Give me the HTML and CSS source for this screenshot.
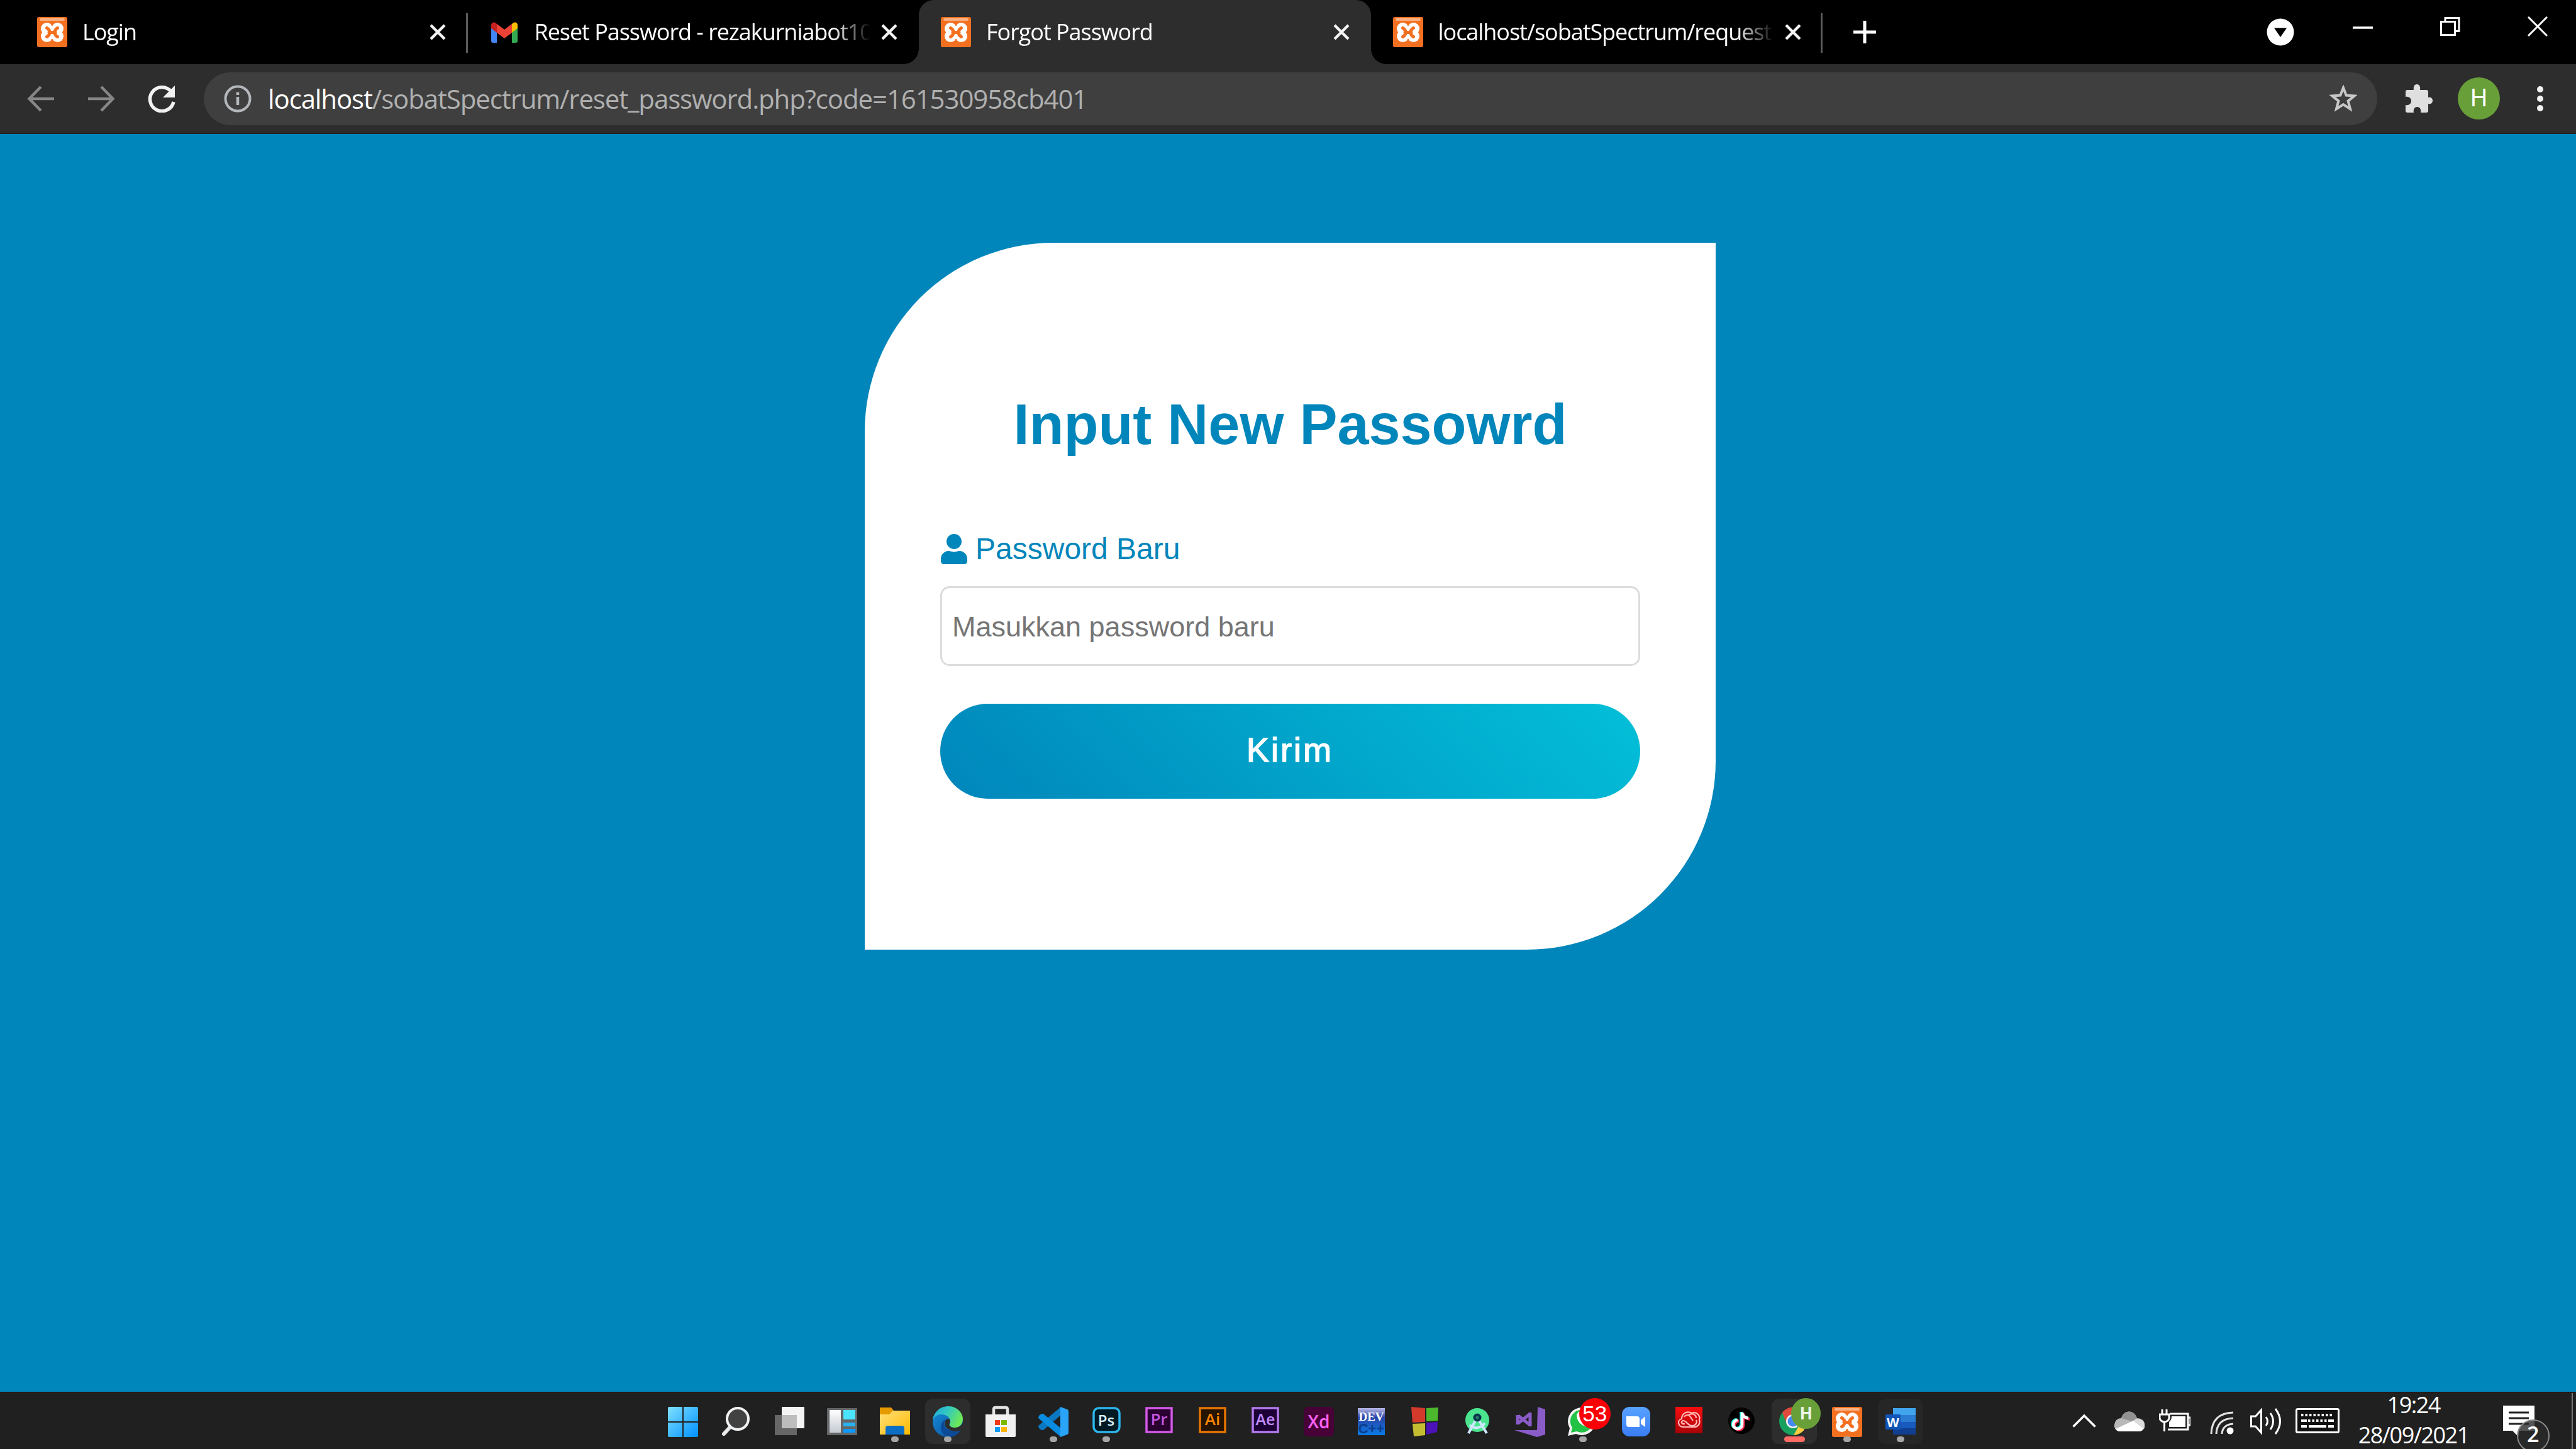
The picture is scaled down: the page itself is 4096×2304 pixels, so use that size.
FILE: index.html
```html
<!DOCTYPE html>
<html lang="id">
<head>
<meta charset="utf-8">
<title>Forgot Password</title>
<link rel="stylesheet" href="styles.css">
</head>
<body>
<svg class="defs" width="0" height="0">
  <defs>
    <linearGradient id="gWin" x1="0" y1="0" x2="1" y2="1"><stop offset="0" stop-color="#7fe0ff"/><stop offset="1" stop-color="#0090ff"/></linearGradient>
    <linearGradient id="gFolder" x1="0" y1="0" x2="1" y2="1"><stop offset="0" stop-color="#ffe07a"/><stop offset="1" stop-color="#ffb900"/></linearGradient>
    <linearGradient id="gEdgeTop" x1="0" y1="0" x2="1" y2=".4"><stop offset="0" stop-color="#1fa8e0"/><stop offset=".5" stop-color="#32c8c0"/><stop offset="1" stop-color="#6be85a"/></linearGradient>
    <linearGradient id="gEdgeLow" x1="0" y1="0" x2="1" y2="1"><stop offset="0" stop-color="#1590dc"/><stop offset="1" stop-color="#0c4a98"/></linearGradient>
    <linearGradient id="gPanel" x1="0" y1="0" x2="0" y2="1"><stop offset="0" stop-color="#fff"/><stop offset="1" stop-color="#c4c9d2"/></linearGradient>
    <linearGradient id="gDev" x1="0" y1="0" x2="0" y2="1"><stop offset="0" stop-color="#b9b9e6"/><stop offset=".35" stop-color="#2a45a8"/><stop offset="1" stop-color="#0a7be8"/></linearGradient>
    <linearGradient id="gZoom" x1="0" y1="0" x2="0" y2="1"><stop offset="0" stop-color="#57a2ff"/><stop offset="1" stop-color="#3a7df5"/></linearGradient>
    <linearGradient id="gRed" x1="0" y1="0" x2="0" y2="1"><stop offset="0" stop-color="#fb0d10"/><stop offset="1" stop-color="#a80206"/></linearGradient>
    <symbol id="xampp" viewBox="0 0 48 48">
      <rect width="48" height="48" rx="3" fill="#f37021"/>
      <rect x="4" y="2" width="40" height="4" rx="2" fill="#f9b183"/>
      <g fill="#fff"><circle cx="15.500" cy="18.500" r="9.500"/><circle cx="32.500" cy="18.500" r="9.500"/><circle cx="15.500" cy="30.500" r="9.500"/><circle cx="32.500" cy="30.500" r="9.500"/><path d="M14 14h20v21H14z"/></g>
      <path d="M24 8v5.500M24 41v-5.500" stroke="#f37021" stroke-width="3"/>
      <path d="M15.500 17.500q5 3 4 7 1 4-4 7M32.500 17.500q-5 3-4 7-1 4 4 7M19 24.500h10" fill="none" stroke="#f37021" stroke-width="5" stroke-linecap="round"/>
    </symbol>
    <symbol id="cross" viewBox="0 0 26 26"><path d="M2 2l22 22M24 2L2 24" stroke="#f4f4f4" stroke-width="4.500" fill="none"/></symbol>
  </defs>
</svg>

<header class="tabstrip">
  <div class="tab">
    <svg class="favicon"><use href="#xampp"/></svg>
    <span class="tab-title">Login</span>
    <svg class="tab-close"><use href="#cross"/></svg>
  </div>
  <div class="tab divided">
    <svg class="favicon" viewBox="0 0 48 48"><path d="M3 12v26a3 3 0 0 0 3 3h6V21z" fill="#4285f4"/><path d="M45 12v26a3 3 0 0 1-3 3h-6V21z" fill="#34a853"/><path d="M36 11l2-1.500c3-2.200 7-.3 7 3.500v5l-9 7z" fill="#fbbc04"/><path d="M12 11l-2-1.500C7 7.300 3 9.200 3 13v5l9 7z" fill="#c5221f"/><path d="M12 11l12 9 12-9v14l-12 9-12-9z" fill="#ea4335"/></svg>
    <span class="tab-title">Reset Password - rezakurniabot10</span>
    <svg class="tab-close"><use href="#cross"/></svg>
  </div>
  <div class="tab active">
    <svg class="favicon"><use href="#xampp"/></svg>
    <span class="tab-title">Forgot Password</span>
    <svg class="tab-close"><use href="#cross"/></svg>
  </div>
  <div class="tab last">
    <svg class="favicon"><use href="#xampp"/></svg>
    <span class="tab-title">localhost/sobatSpectrum/request</span>
    <svg class="tab-close"><use href="#cross"/></svg>
  </div>
  <svg class="new-tab" viewBox="0 0 36 36"><path d="M18 0v36M0 18h36" stroke="#fff" stroke-width="5"/></svg>
  <div class="window-buttons">
    <svg width="44" height="44" viewBox="0 0 44 44" class="drop"><circle cx="22" cy="22" r="21.500" fill="#fff"/><path d="M12 15.500h20L22 30z" fill="#000"/></svg>
    <svg width="32" height="32" viewBox="0 0 32 32"><path d="M0 18h32" stroke="#fff" stroke-width="3.500"/></svg>
    <svg width="32" height="32" viewBox="0 0 32 32"><path d="M1.500 8.500h22v21h-22zM8 8V2.500h22v21h-6" fill="none" stroke="#fff" stroke-width="3"/></svg>
    <svg width="32" height="32" viewBox="0 0 32 32"><path d="M1 1l30 30M31 1L1 31" stroke="#fff" stroke-width="3"/></svg>
  </div>
</header>

<nav class="toolbar">
  <svg class="nav-icon" viewBox="0 0 44 44"><path d="M43 22H4M22 3L3.500 22 22 41" fill="none" stroke="#868686" stroke-width="4.500"/></svg>
  <svg class="nav-icon" viewBox="0 0 44 44"><path d="M1 22h39M22 3l18.500 19L22 41" fill="none" stroke="#868686" stroke-width="4.500"/></svg>
  <svg class="nav-icon" viewBox="0 0 44 44"><path d="M37.500 11A19 19 0 1 0 41 27" fill="none" stroke="#f1f1f1" stroke-width="5.500"/><path d="M43 1v19H24z" fill="#f1f1f1"/></svg>
  <div class="omnibox">
    <svg class="info" viewBox="0 0 44 44"><circle cx="22" cy="22" r="19.500" fill="none" stroke="#b4b8bc" stroke-width="4"/><path d="M22 19v13M22 11.500v4.500" stroke="#b4b8bc" stroke-width="4.500"/></svg>
    <span class="url"><b>localhost</b>/sobatSpectrum/reset_password.php?code=161530958cb401</span>
    <svg class="star" viewBox="0 0 44 44"><path d="M22 4.500l4.700 12.100 13 .8-10.100 8.200 3.400 12.600L22 31.100l-11 7.100 3.400-12.600L4.300 17.400l13-.8z" fill="none" stroke="#c8c8c8" stroke-width="4"/></svg>
  </div>
  <svg class="puzzle" viewBox="0 0 44 46"><path d="M4 9h10c-1-5 1-9 5-9s6 4 5 9h10a3 3 0 0 1 3 3v9c4-1 7 1 7 5s-3 6-7 5v11a3 3 0 0 1-3 3h-9c1-5-1-9-5.500-9S13 40 14 45H4a3 3 0 0 1-3-3v-9c5 1 9-2 9-6.500S6 19 1 20v-8a3 3 0 0 1 3-3z" fill="#dfdfdf"/></svg>
  <span class="avatar">H</span>
  <svg class="menu" viewBox="0 0 12 44"><circle cx="6" cy="7" r="5" fill="#f1f1f1"/><circle cx="6" cy="22" r="5" fill="#f1f1f1"/><circle cx="6" cy="37" r="5" fill="#f1f1f1"/></svg>
</nav>

<main class="page">
  <form class="card">
    <h1 class="title">Input New Passowrd</h1>
    <label class="label" for="pw">
      <svg class="user" viewBox="0 0 448 512"><path fill="#0086bb" d="M224 256c70.700 0 128-57.300 128-128S294.700 0 224 0 96 57.300 96 128s57.300 128 128 128zm89.600 32h-16.700c-22.200 10.200-46.900 16-72.900 16s-50.600-5.800-72.900-16h-16.700C60.200 288 0 348.200 0 422.400V464c0 26.500 21.500 48 48 48h352c26.500 0 48-21.500 48-48v-41.600c0-74.200-60.200-134.400-134.400-134.400z"/></svg>
      Password Baru
    </label>
    <input class="field" id="pw" type="password" placeholder="Masukkan password baru">
    <button class="submit" type="button">Kirim</button>
  </form>
</main>

<footer class="taskbar">
  <div class="apps">
    <span class="app"><svg viewBox="0 0 48 48"><path d="M0 2a2 2 0 0 1 2-2h21v23H0zM25 0h21a2 2 0 0 1 2 2v21H25zM0 25h23v23H2a2 2 0 0 1-2-2zM25 25h23v21a2 2 0 0 1-2 2H25z" fill="url(#gWin)"/></svg></span>
    <span class="app"><svg viewBox="0 0 48 48"><path d="M16 31L5 43" stroke="#e6e8ea" stroke-width="6" stroke-linecap="round"/><circle cx="27" cy="19" r="17" fill="#424242" stroke="#f0f2f4" stroke-width="4"/></svg></span>
    <span class="app"><svg viewBox="0 0 48 48"><rect x="13" y="0" width="36" height="34" rx="1" fill="#f4f4f4"/><path d="M2 13h11v21h24v11H2z" fill="#666"/><path d="M13 13h24v21H13z" fill="#bdbdbd"/></svg></span>
    <span class="app"><svg viewBox="0 0 48 48"><rect x="1" y="2" width="48" height="43" rx="1" fill="#646668"/><rect x="5" y="5" width="18" height="36" fill="url(#gPanel)"/><path d="M27 5h19v15H27z" fill="#4ae4ff"/><path d="M27 25h19v6H27z" fill="#28b4f4"/><path d="M27 35h19v6H27z" fill="#0d99ff"/></svg></span>
    <span class="app open"><svg viewBox="0 0 48 48"><path d="M0 1h18l4 5-4 6H0z" fill="#e59a00"/><path d="M0 12h15l6-6h27v38H0z" fill="url(#gFolder)"/><path d="M9 44V34q0-4 4-4h22q4 0 4 4v10z" fill="#0c6fc6"/></svg></span>
    <span class="app open tinted"><svg viewBox="0 0 48 48"><circle cx="24" cy="24" r="24" fill="url(#gEdgeLow)"/><path d="M0 21C2 8 12-1 25-1c14 0 23 11 23 20 0 8-5 14-13 14-6 0-9-2-9-4 0-1 2-2 2-6 0-6-6-11-14-11C7 12 2 16 0 21z" fill="url(#gEdgeTop)"/><path d="M46 35c-2 2-6 4-11 4-10 0-17-6-17-13 0-3 2-6 4-7-5 2-9 7-9 14 0 8 7 15 15 15 8-1 14-6 18-13z" fill="#0c4a98"/><path d="M49 34c-4 4-9 5-14 5-9-1-16-6-16-13 0-4 3-7 6-7 3 1 3 4 2 7-2 4 2 7 8 7 7 0 11-3 13-8z" fill="#2d2d2d"/></svg></span>
    <span class="app"><svg viewBox="0 0 48 48"><path d="M13 13V4q0-3 3-3h16q3 0 3 3v9" fill="none" stroke="#e2e2e2" stroke-width="4.500"/><path d="M0 12h48v34a2 2 0 0 1-2 2H2a2 2 0 0 1-2-2z" fill="#f1f1f1"/><path d="M15 21h8v8h-8z" fill="#f03a17"/><path d="M25 21h9v8h-9z" fill="#7cba00"/><path d="M15 32h8v8h-8z" fill="#0a9cf0"/><path d="M25 32h9v8h-9z" fill="#ffb600"/></svg></span>
    <span class="app open"><svg viewBox="0 0 48 48"><path d="M36 0L0 30l1 4 4 3h3L37 12z" fill="#0a78c0"/><path d="M36 48L0 18l1-4 4-3h3l29 24z" fill="#0a8ce0"/><path d="M35 0l11 4q2 1 2 3v34q0 2-2 3l-11 4z" fill="#2aa4f6"/></svg></span>
    <span class="app open"><svg viewBox="0 0 48 48"><rect x="4" y="2" width="41" height="38" rx="8" fill="#001a24" stroke="#2cb7ec" stroke-width="3.500"/><text x="24" y="30" class="glyph" font-size="24" fill="#d5f1fa">Ps</text></svg></span>
    <span class="app"><svg viewBox="0 0 48 48"><rect x="4" y="2" width="40" height="38" fill="#2a0030" stroke="#d45ae8" stroke-width="3.500"/><text x="24" y="29" class="glyph" font-size="26" fill="#c255e0">Pr</text></svg></span>
    <span class="app"><svg viewBox="0 0 48 48"><rect x="4" y="2" width="40" height="38" fill="#261300" stroke="#ea7500" stroke-width="3.500"/><text x="24" y="29" class="glyph" font-size="26" fill="#ff8400">Ai</text></svg></span>
    <span class="app"><svg viewBox="0 0 48 48"><rect x="4" y="2" width="40" height="38" fill="#1c0036" stroke="#b67af0" stroke-width="3.500"/><text x="24" y="29" class="glyph" font-size="25" fill="#c08aff">Ae</text></svg></span>
    <span class="app"><svg viewBox="0 0 48 48"><rect x="1" width="48" height="47" rx="7" fill="#470137"/><text x="25" y="34" class="glyph" font-size="28" fill="#ff61f6">Xd</text></svg></span>
    <span class="app"><svg viewBox="0 0 48 48"><path d="M3 2h43v43H3z" fill="url(#gDev)"/><text x="24.500" y="22" class="serif" font-size="19" fill="#fff">DEV</text><text x="24.500" y="42" class="cpp" font-size="22" fill="#0a3f8c">C++</text></svg></span>
    <span class="app"><svg viewBox="0 0 48 48"><path d="M4 0l22 2v22L6 25z" fill="#d33a2c"/><path d="M28 2l19-1-1 21-18 1z" fill="#4cb82c"/><path d="M6 27l20-1v19L8 47z" fill="#c4bd32"/><path d="M28 25l18-1-1 16-17 4z" fill="#4a12b8"/></svg></span>
    <span class="app"><svg viewBox="0 0 48 48"><circle cx="25" cy="21" r="19" fill="#4be58f"/><path d="M22 22L11 42M28 22l12 20M13 29q12 10 24-3" fill="none" stroke="#cfe6ff" stroke-width="4"/><circle cx="25" cy="17" r="4.500" fill="#2b7a66" stroke="#08344c" stroke-width="4"/></svg></span>
    <span class="app"><svg viewBox="0 0 48 48"><path d="M36 0l12 4v40l-13 4-36-11h36z" fill="#8a5cc8"/><path d="M5 14L24 29M5 26L24 11M24 9v22M4 13v15" fill="none" stroke="#8a5cc8" stroke-width="5"/></svg></span>
    <span class="app open"><svg viewBox="0 0 48 48"><path d="M0 46l3-12A22 22 0 1 1 13 43z" fill="#f4f4f4"/><path d="M5 41l2-8a18 18 0 1 1 7 6z" fill="#22c244"/><path d="M14 12q0 16 17 20l6-5-7-5-4 3q-6-3-7-8l3-4-4-6z" fill="#fff"/></svg><i class="count">53</i></span>
    <span class="app"><svg viewBox="0 0 48 48"><rect x="2" y="0" width="45" height="47" rx="12" fill="url(#gZoom)"/><path d="M9 15h17q4 0 4 4v13H13q-4 0-4-4zM32 21l7-6v17l-7-5z" fill="#fff"/></svg></span>
    <span class="app"><svg viewBox="0 0 48 48"><path d="M3 0h43v42H3z" fill="url(#gRed)"/><g fill="none" stroke="#ffb9b9" stroke-width="2.200"><path d="M16 32c-9 0-11-11-3-13 0-9 9-13 16-9 8-3 14 4 12 11 2 7-3 11-9 11z"/><path d="M18 27c-6 1-7-5-2-5 4 0 7 8 13 8 7 0 9-6 7-9M17 16c2-4 8-4 10 0l4 6M24 13c5-4 12-1 12 5"/></g></svg></span>
    <span class="app"><svg viewBox="0 0 48 48"><circle cx="24" cy="22" r="21" fill="#000"/><g fill="none" stroke-width="4.500"><path d="M25 9v19a7 7 0 1 1-7-7M25 9q1 8 10 9" stroke="#25f4ee" transform="translate(-1.500 -1)"/><path d="M25 9v19a7 7 0 1 1-7-7M25 9q1 8 10 9" stroke="#fe2c55" transform="translate(2 1.500)"/><path d="M25 9v19a7 7 0 1 1-7-7M25 9q1 8 10 9" stroke="#fff"/></g></svg></span>
    <span class="app tinted current"><svg viewBox="0 0 48 48"><circle cx="22" cy="23" r="22" fill="#18a05e"/><path d="M5 9A22 22 0 0 1 44 18H22L12 27z" fill="#e04a3c"/><path d="M44 20a22 22 0 0 1-21 25l10-18z" fill="#ffcd40"/><circle cx="22" cy="23" r="11" fill="#f4f4f4"/><circle cx="22" cy="23" r="8.500" fill="#4688f4"/></svg><i class="profile">H</i></span>
    <span class="app open"><svg viewBox="0 0 48 48"><use href="#xampp"/></svg></span>
    <span class="app open tinted dim"><svg viewBox="0 0 48 48"><path d="M12 2h36v11H12z" fill="#41a5ee"/><path d="M12 13h36v11H12z" fill="#2b7cd3"/><path d="M12 24h36v10H12z" fill="#185abd"/><path d="M12 34h36v10H12z" fill="#103f91"/><rect y="12" width="24" height="24" rx="1" fill="#1255b8"/><text x="12" y="31.500" class="word" font-size="21" fill="#fff">W</text></svg></span>
  </div>
  <div class="tray">
    <svg class="chev" viewBox="0 0 38 22"><path d="M1.500 20.500L19 3l17.500 17.500" fill="none" stroke="#fff" stroke-width="3.500"/></svg>
    <svg class="cloud" viewBox="0 0 50 34"><path d="M10 33C2 33-1 25 2 19c1-4 5-7 10-7C15-1 32-3 37 12c8 0 13 5 12 12 0 6-4 9-9 9z" fill="#b8b8b8"/><path d="M12 12C16-1 32-3 37 12l-8 5z" fill="#929292"/><path d="M3 29l28-13 16 12q-2 5-7 5H10q-5 0-7-4z" fill="#fff"/><path d="M31 16q7-6 15 0 5 6 2 13z" fill="#dcdcdc"/></svg>
    <svg class="battery" viewBox="0 0 50 36"><path d="M17 7h29v25H14M47 13h3v12h-3" fill="none" stroke="#fff" stroke-width="3"/><path d="M20 11h22v17H16v-8q4-3 4-9z" fill="#fff"/><path d="M5 0v8M12 0v8M1 8h15v6q-1 5-7 6-7-1-8-6zM8.500 20v15" fill="none" stroke="#fff" stroke-width="3"/></svg>
    <svg class="wifi" viewBox="0 0 38 37"><g fill="none" stroke="#e0e0e0" stroke-width="3"><path d="M2 36Q3 3 37 2"/><path d="M10 36q1-24 27-25"/><path d="M19 36q1-15 18-16"/></g><circle cx="32" cy="31" r="5.500" fill="#fff"/></svg>
    <svg class="sound" viewBox="0 0 50 44"><path d="M1.500 14h7l9-10v36l-9-10h-7z" fill="none" stroke="#fff" stroke-width="3"/><path d="M25 15q5 7 0 14M32 9q9 13 0 26M40 2q15 20 0 40" fill="none" stroke="#fff" stroke-width="3"/></svg>
    <svg class="keys" viewBox="0 0 70 40"><rect x="1.500" y="1.500" width="67" height="37" rx="2" fill="#111" stroke="#fff" stroke-width="3"/><path d="M9 11h52" stroke="#fff" stroke-width="4" stroke-dasharray="3.500 3"/><path d="M20 20h30" stroke="#fff" stroke-width="4" stroke-dasharray="3.500 3"/><path d="M9 20h9M52 20h9M9 29h9M21 29h28M52 29h9" stroke="#fff" stroke-width="4"/></svg>
    <div class="clock"><span>19:24</span><span>28/09/2021</span></div>
    <div class="notice">
      <svg viewBox="0 0 50 50"><path d="M0 0h50v40H25v10L15 40H0z" fill="#fff"/><path d="M9 11h32M9 20h32M9 29h32" stroke="#222" stroke-width="3"/></svg>
      <i class="notice-count">2</i>
    </div>
  </div>
</footer>
</body>
</html>
```
FILE: styles.css
```css
* { box-sizing: border-box; }
body {
  margin: 0;
  width: 4096px;
  height: 2304px;
  overflow: hidden;
  display: flex;
  flex-direction: column;
  background: #0086bb;
  font-family: "Liberation Sans", Arial, sans-serif;
}
svg { display: block; flex: none; }
.defs { position: absolute; }
i { font-style: normal; }

/* tab strip */
.tabstrip {
  height: 102px;
  flex: none;
  display: flex;
  background: #000;
  padding-left: 24px;
  font-family: "Open Sans", "Noto Sans", sans-serif;
}
.tab {
  position: relative;
  width: 718.500px;
  height: 102px;
  flex: none;
  display: flex;
  align-items: center;
  padding: 0 34px 0 35px;
}
.favicon { width: 48px; height: 48px; }
.tab-title {
  flex: 1;
  margin: 0 17px 0 24px;
  overflow: hidden;
  white-space: nowrap;
  color: #fff;
  font-size: 36px;
  line-height: 60px;
  letter-spacing: -1.050px;
  -webkit-mask-image: linear-gradient(to right, #000 calc(100% - 60px), transparent);
  mask-image: linear-gradient(to right, #000 calc(100% - 60px), transparent);
}
.tab-close { width: 26px; height: 26px; }
.divided::before, .last::after {
  content: "";
  position: absolute;
  top: 21px;
  left: -2px;
  width: 3px;
  height: 63px;
  background: #5a5a5a;
}
.last::after { left: auto; right: 0; }
.active { background: #2d2d2d; border-radius: 24px 24px 0 0; }
.active::before, .active::after {
  content: "";
  position: absolute;
  bottom: 0;
  width: 24px;
  height: 24px;
}
.active::before { left: -24px; background: radial-gradient(circle at 0 0, transparent 23.500px, #2d2d2d 24px); }
.active::after { right: -24px; background: radial-gradient(circle at 100% 0, transparent 23.500px, #2d2d2d 24px); }
.new-tab { width: 36px; height: 36px; margin: 33px 0 0 49px; }
.window-buttons {
  margin-left: auto;
  padding: 26px 45px 0 0;
  display: flex;
  gap: 107px;
}
.window-buttons .drop { margin: 3px -14px 0 0; }

/* address bar row */
.toolbar {
  height: 111px;
  flex: none;
  display: flex;
  align-items: center;
  padding: 0 51px 0 43px;
  background: #2d2d2d;
  border-bottom: 2px solid #241e1c;
}
.nav-icon { width: 44px; height: 44px; margin-right: 52px; }
.nav-icon + .omnibox { margin-left: -7px; }
.omnibox {
  flex: 1;
  height: 84px;
  display: flex;
  align-items: center;
  padding: 0 32px;
  border-radius: 42px;
  background: #3f3f3f;
}
.info { width: 44px; height: 44px; }
.url {
  flex: 1;
  margin-left: 26px;
  color: #b0b0b0;
  white-space: nowrap;
  font: 42px/60px "Open Sans", "Noto Sans", sans-serif;
  letter-spacing: -1.120px;
}
.url b { font-weight: 400; color: #fff; }
.star { width: 44px; height: 44px; }
.puzzle { width: 44px; height: 46px; margin-left: 44px; }
.avatar {
  width: 67px;
  height: 67px;
  margin: 0 58px 0 40px;
  border-radius: 50%;
  background: #689f38;
  color: #fff;
  text-align: center;
  font: 38px/67px Roboto, sans-serif;
}
.menu { width: 12px; height: 44px; }

/* page */
.page { flex: 1; padding: 173px 0 0 1375px; }
.card {
  width: 1353px;
  height: 1124px;
  padding: 237px 120px 0;
  display: flex;
  flex-direction: column;
  background: #fff;
  border-radius: 300px 0 300px 0;
}
.title {
  margin: 0;
  text-align: center;
  color: #0086bb;
  font-size: 90px;
  line-height: 104px;
  white-space: nowrap;
}
.label {
  margin-top: 116px;
  padding-left: 1px;
  display: flex;
  align-items: center;
  gap: 13px;
  color: #0086bb;
  font-size: 48px;
  line-height: 60px;
}
.user { width: 42px; height: 48px; }
.field {
  margin: 29px 0 60px;
  height: 127px;
  padding: 2px 16px 0;
  border: 3px solid #dcdcdc;
  border-radius: 15px;
  background: #fff;
  font: 45px "Liberation Sans", Arial, sans-serif;
}
.field::placeholder { color: #757575; opacity: 1; }
.submit {
  height: 151px;
  padding: 0 1px 5px 0;
  border: 0;
  border-radius: 76px;
  background: linear-gradient(45deg, #0086bb, #03bfd8);
  color: #fff;
  font: 54px "Liberation Sans", Arial, sans-serif;
  letter-spacing: 3px;
  -webkit-text-stroke: 1.500px #fff;
}

/* taskbar */
.taskbar {
  height: 91px;
  flex: none;
  display: flex;
  background: #202020;
  border-top: 2px solid #251817;
  padding-left: 1044px;
}
.apps { display: flex; }
.app {
  position: relative;
  width: 84.170px;
  padding: 22px 18px 0;
}
.app svg { width: 48px; height: 48px; position: relative; overflow: visible; }
.app.tinted::before {
  content: "";
  position: absolute;
  top: 9px;
  left: 6px;
  width: 72px;
  height: 72px;
  border-radius: 12px;
  background: #2d2d2d;
}
.app.dim::before { background: #262626; }
.app.open::after, .app.current::after {
  content: "";
  position: absolute;
  top: 69px;
  left: 36px;
  width: 12px;
  height: 9px;
  border-radius: 5px;
  background: #a6a6a6;
}
.app.current::after { left: 26px; width: 33px; background: #ff6b64; }
.glyph { font-family: "Open Sans", sans-serif; font-weight: 600; text-anchor: middle; }
.serif { font-family: "Liberation Serif", serif; font-weight: 700; text-anchor: middle; }
.cpp, .word { font-family: "Liberation Sans", sans-serif; font-weight: 700; text-anchor: middle; }
.count, .profile {
  position: absolute;
  top: 8px;
  left: 36px;
  width: 50px;
  height: 50px;
  border-radius: 50%;
  z-index: 1;
  text-align: center;
  color: #fff;
  background: #fb0007;
  font: 35px/50px "Liberation Sans", sans-serif;
}
.profile {
  left: 37px;
  width: 47px;
  height: 49px;
  background: #689f38;
  color: #eef5e6;
  font: 700 27px/51px Roboto, sans-serif;
}
.tray {
  flex: 1;
  display: flex;
  align-items: flex-start;
  margin: 0 5px 0 231px;
  border-right: 2px solid #777;
  color: #fff;
}
.chev { width: 38px; height: 22px; margin: 33px 28px 0 0; }
.cloud { width: 50px; height: 34px; margin: 28px 22px 0 0; }
.battery { width: 50px; height: 36px; margin: 26px 31px 0 0; }
.wifi { width: 38px; height: 37px; margin: 29px 26px 0 0; }
.sound { width: 50px; height: 44px; margin: 23px 22px 0 0; }
.keys { width: 70px; height: 40px; margin-top: 24px; }
.clock {
  width: 180px;
  margin: -5px 0 0 28px;
  display: flex;
  flex-direction: column;
  align-items: center;
  font: 36px/48px "Open Sans", "Noto Sans", sans-serif;
  letter-spacing: -1.500px;
  white-space: nowrap;
}
.notice { position: relative; margin: 20px 0 0 52px; }
.notice svg { width: 50px; height: 50px; }
.notice-count {
  position: absolute;
  left: 22px;
  top: 22px;
  width: 52px;
  height: 52px;
  border: 2px solid #8a8a8a;
  border-radius: 50%;
  background: #2a2a2acc;
  text-align: center;
  font: 600 34px/42px "Open Sans", sans-serif;
}
```
